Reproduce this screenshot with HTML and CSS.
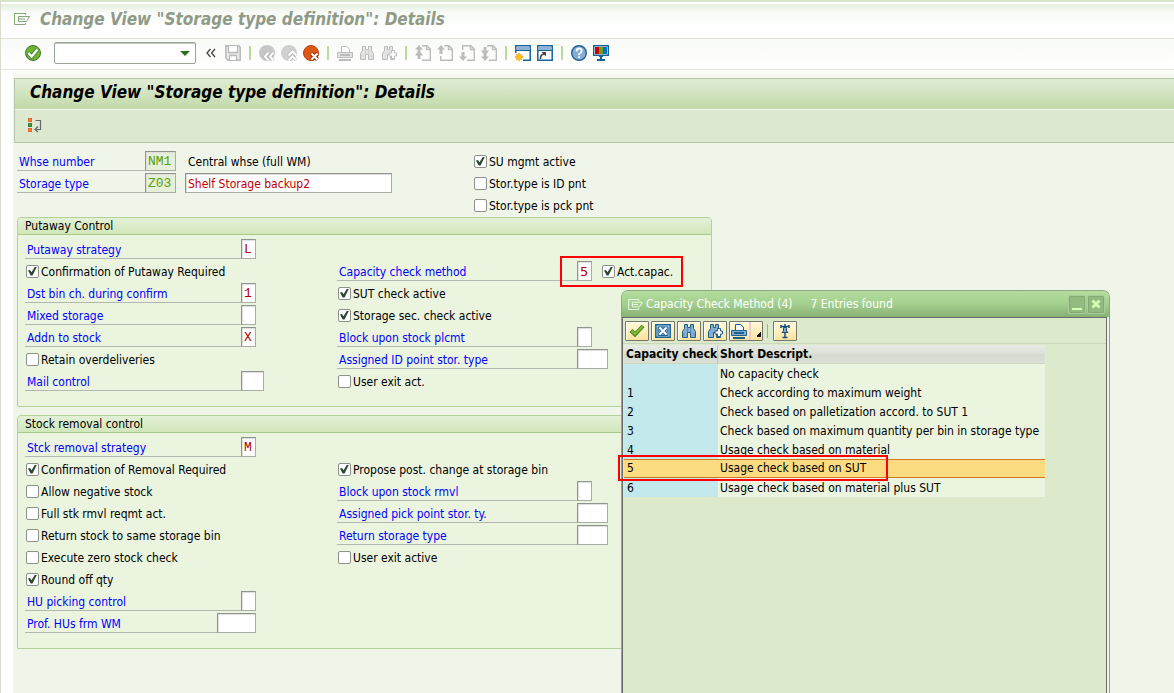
FILE: index.html
```html
<!DOCTYPE html>
<html lang="en">
<head>
<meta charset="utf-8">
<title>Change View "Storage type definition": Details</title>
<link rel="stylesheet" href="styles.css">
</head>
<body>
<svg class="defs" width="0" height="0" aria-hidden="true">
  <symbol id="menu" viewBox="0 0 16 12"><path d="M11.500 2V.5H.5v11h11V10M15.500 3.500H4.500v5h8zM4 6h7" fill="none" stroke="currentColor"/></symbol>
  <symbol id="find" viewBox="0 0 16 16"><path d="M3.500 1.500h3v3h3v-3h3v4l2 3v6h-5v-5h-3v5h-5v-6l2-3z" fill="var(--fill)" stroke="currentColor"/><path d="M6.500 5v4M9.500 5v4M3 10v3M13 10v3" stroke="currentColor" opacity=".4"/></symbol>
  <symbol id="findnext" viewBox="0 0 16 16"><path d="M3.500 1.500h3v3h2v-3h3v4l2 3v6h-4v-5h-3v5h-5v-6l2-3z" fill="var(--fill)" stroke="currentColor"/><path d="M10.500 5.500h3v2.500h2v3h-2v2.500h-3v-2.500h-2.500v-3h2.500z" fill="#fff" stroke="currentColor"/></symbol>
  <symbol id="print" viewBox="0 0 16 16"><path d="M4.500 7V1.500h5l3 2.500V7" fill="#fff" stroke="currentColor"/><path d="M.5 7.500h15v5H.5z" fill="var(--fill)" stroke="currentColor"/><path d="M3 10h10M2 15h12" stroke="currentColor" stroke-width="2"/></symbol>
</svg>

<header class="titlebar">
  <svg class="menu-icon" width="16" height="12" aria-hidden="true"><use href="#menu"/></svg>
  <span class="heading">Change View "Storage type definition": Details</span>
</header>

<nav class="toolbar" aria-label="System toolbar">
  <button class="tool" aria-label="Enter"><svg viewBox="0 0 16 16"><circle cx="8" cy="8" r="7.500" fill="#6eb32b" stroke="#3d7a33"/><path d="M3.500 8l3 3.500 6-7" fill="none" stroke="#3d7a33" stroke-width="4"/><path d="M3.500 8l3 3.500 6-7" fill="none" stroke="#fff" stroke-width="2.500"/></svg></button>
  <div class="command"><input type="text" aria-label="Command"><button aria-label="Show history"></button></div>
  <button class="tool chevrons" aria-label="Hide command field"><svg viewBox="0 0 10 10"><path d="M4.500 1L1 5l3.500 4M9 1L5.500 5 9 9" fill="none" stroke="#444" stroke-width="1.300"/></svg></button>
  <button class="tool" aria-label="Save"><svg viewBox="0 0 16 16"><path d="M.8.8h13l1.400 1.400v13H3L.8 13z" fill="#e9e9e9" stroke="#b9b9b9" stroke-width="1.500"/><path d="M3.500 1v6.500h9V1M4.500 15v-4.500h7V15" fill="#fff" stroke="#b9b9b9" stroke-width="1.300"/></svg></button>
  <span class="sep"></span>
  <button class="tool" aria-label="Back"><svg viewBox="0 0 16 16"><circle cx="8" cy="8" r="8" fill="#c6c6c6"/><path d="M9.500 7.500L6 11.500l3.500 4M14.500 7.500L11 11.500l3.500 4" fill="none" stroke="#aaa" stroke-width="3"/><path d="M9.500 7.500L6 11.500l3.500 4M14.500 7.500L11 11.500l3.500 4" fill="none" stroke="#fff" stroke-width="2"/></svg></button>
  <button class="tool" aria-label="Exit"><svg viewBox="0 0 16 16"><circle cx="8" cy="8" r="8" fill="#d0d0d0"/><path d="M7.500 10.500l4-4 4 4M7.500 15.500l4-4 4 4" fill="none" stroke="#aaa" stroke-width="3"/><path d="M7.500 10.500l4-4 4 4M7.500 15.500l4-4 4 4" fill="none" stroke="#fff" stroke-width="2"/></svg></button>
  <button class="tool" aria-label="Cancel"><svg viewBox="0 0 16 16"><circle cx="8" cy="8" r="7.500" fill="#dc5914" stroke="#bf3d0c"/><path d="M8.500 8.500l6 6M14.500 8.500l-6 6" stroke="#a62008" stroke-width="4"/><path d="M8.500 8.500l6 6M14.500 8.500l-6 6" stroke="#fff" stroke-width="2.200"/></svg></button>
  <span class="sep"></span>
  <button class="tool off" aria-label="Print"><svg><use href="#print"/></svg></button>
  <button class="tool off" aria-label="Find"><svg><use href="#find"/></svg></button>
  <button class="tool off" aria-label="Find next"><svg><use href="#findnext"/></svg></button>
  <span class="sep"></span>
  <button class="tool off" aria-label="First page"><svg viewBox="0 0 16 16"><path d="M7 .7h5l3.300 3.300v11.300H7M11.500 1v3.500H15" fill="none" stroke="currentColor" stroke-width="1.400"/><path d="M4 0l4 4.500H5.500V7L8 10.500H5.500V14h-3v-3.500H0L2.500 7V4.500H0z" fill="currentColor"/></svg></button>
  <button class="tool off" aria-label="Previous page"><svg viewBox="0 0 16 16"><path d="M7 .7h5l3.300 3.300v11.300H3.700V11M11.500 1v3.500H15" fill="none" stroke="currentColor" stroke-width="1.400"/><path d="M4 0l4 4.500H5.500V9h-3V4.500H0z" fill="currentColor"/></svg></button>
  <button class="tool off" aria-label="Next page"><svg viewBox="0 0 16 16"><path d="M3.700 5V.7H12l3.300 3.300v11.300H8M11.500 1v3.500H15" fill="none" stroke="currentColor" stroke-width="1.400"/><path d="M4 16l4-4.500H5.500V7h-3v4.500H0z" fill="currentColor"/></svg></button>
  <button class="tool off" aria-label="Last page"><svg viewBox="0 0 16 16"><path d="M6 .7h6l3.300 3.300v11.300H8M11.500 1v3.500H15" fill="none" stroke="currentColor" stroke-width="1.400"/><path d="M4 16l4-4.500H5.500V9L8 5.500H5.500V2h-3v3.500H0L2.500 9v2.500H0z" fill="currentColor"/></svg></button>
  <span class="sep"></span>
  <button class="tool" aria-label="New session"><svg viewBox="0 0 16 16"><path d="M.8 8V.8h14.400v14.400H8" fill="#fff" stroke="#16629a" stroke-width="1.500"/><path d="M1.500 1.500h13V5h-13z" fill="#8fb2d6"/><path d="M1 5.500h14" stroke="#16629a"/><path d="M4 8v8M0 12h8M1.200 9.200l5.600 5.600M6.800 9.200l-5.600 5.600" stroke="#f39200" stroke-width="1.300"/><circle cx="4" cy="12" r="2.300" fill="#ffc400"/></svg></button>
  <button class="tool" aria-label="Create shortcut"><svg viewBox="0 0 16 16"><path d="M.8.8h14.400v14.400H.8z" fill="#fff" stroke="#16629a" stroke-width="1.500"/><path d="M1.500 1.500h13V5h-13z" fill="#8fb2d6"/><path d="M1 5.500h14" stroke="#16629a"/><path d="M3.500 14q-.5-4 3.500-5" fill="none" stroke="#444" stroke-width="1.600"/><path d="M4.500 7H9v4.500z" fill="#444"/></svg></button>
  <span class="sep"></span>
  <button class="tool" aria-label="Help"><svg viewBox="0 0 16 16"><circle cx="8" cy="8" r="7.300" fill="#85abd3" stroke="#1c6395" stroke-width="1.400"/><path d="M5.500 6.500q0-3 2.700-3t2.500 2.500q0 1.500-2.500 3v1.200M8.200 11.300v2" fill="none" stroke="#fff" stroke-width="1.800"/></svg></button>
  <button class="tool" aria-label="Customize layout"><svg viewBox="0 0 16 16"><path d="M.7.700h14.600v9.600H.7z" fill="#fff" stroke="#16629a" stroke-width="1.400"/><path d="M2 2h4v7H2z" fill="#d00000"/><path d="M6 2h4v7H6z" fill="#62a51b"/><path d="M10 2h4v7h-4z" fill="#0071c5"/><path d="M6 11h4v1H6zM7 11h2v3H7zM4 14h8v2H4z" fill="#16629a"/></svg></button>
</nav>

<main class="screen">
  <section class="app-head">
    <h1 class="heading">Change View "Storage type definition": Details</h1>
    <div class="app-tools"><button class="tool" aria-label="Expand or collapse"><svg viewBox="0 0 16 16"><path d="M.7 1.700h2.600v2.600H.7zM.7 11.700h2.600v2.600H.7z" fill="#ffd54a" stroke="#e4672b" stroke-width="1.400"/><path d="M.7 6.700h2.600v2.600H.7z" fill="#8cc63f" stroke="#35803a" stroke-width="1.400"/><path d="M7.500 3.500h5v9H7M10 9.500l-3 3 3 2.500" fill="none" stroke="#66666e" stroke-width="1.200"/></svg></button></div>
  </section>

  <form class="form">
    <div class="top">
      <div>
        <div class="row"><label class="lbl key" for="wh">Whse number</label><input class="f w3 ro" id="wh" value="NM1" readonly><span class="note">Central whse (full WM)</span></div>
        <div class="row"><label class="lbl key" for="st">Storage type</label><input class="f w3 ro" id="st" value="Z03" readonly><input class="f desc" aria-label="Description" value="Shelf Storage backup2"></div>
      </div>
      <div>
        <label class="check"><input type="checkbox" checked><span>SU mgmt active</span></label>
        <label class="check"><input type="checkbox"><span>Stor.type is ID pnt</span></label>
        <label class="check"><input type="checkbox"><span>Stor.type is pck pnt</span></label>
      </div>
    </div>

    <section class="group">
      <h2>Putaway Control</h2>
      <div class="cols">
        <div>
          <div class="row"><label class="lbl" for="a1">Putaway strategy</label><input class="f w1" id="a1" value="L"></div>
          <label class="check"><input type="checkbox" checked><span>Confirmation of Putaway Required</span></label>
          <div class="row"><label class="lbl" for="a2">Dst bin ch. during confirm</label><input class="f w1" id="a2" value="1"></div>
          <div class="row"><label class="lbl" for="a3">Mixed storage</label><input class="f w1" id="a3"></div>
          <div class="row"><label class="lbl" for="a4">Addn to stock</label><input class="f w1" id="a4" value="X"></div>
          <label class="check"><input type="checkbox"><span>Retain overdeliveries</span></label>
          <div class="row"><label class="lbl" for="a5">Mail control</label><input class="f w2" id="a5"></div>
        </div>
        <div class="right">
          <div class="row capacity"><label class="lbl" for="b1">Capacity check method</label><input class="f w1 sans" id="b1" value="5"><label class="check"><input type="checkbox" checked><span>Act.capac.</span></label><span class="mark"></span></div>
          <label class="check"><input type="checkbox" checked><span>SUT check active</span></label>
          <label class="check"><input type="checkbox" checked><span>Storage sec. check active</span></label>
          <div class="row"><label class="lbl" for="b2">Block upon stock plcmt</label><input class="f w1" id="b2"></div>
          <div class="row"><label class="lbl" for="b3">Assigned ID point stor. type</label><input class="f w3" id="b3"></div>
          <label class="check"><input type="checkbox"><span>User exit act.</span></label>
        </div>
      </div>
    </section>

    <section class="group">
      <h2>Stock removal control</h2>
      <div class="cols">
        <div>
          <div class="row"><label class="lbl" for="c1">Stck removal strategy</label><input class="f w1" id="c1" value="M"></div>
          <label class="check"><input type="checkbox" checked><span>Confirmation of Removal Required</span></label>
          <label class="check"><input type="checkbox"><span>Allow negative stock</span></label>
          <label class="check"><input type="checkbox"><span>Full stk rmvl reqmt act.</span></label>
          <label class="check"><input type="checkbox"><span>Return stock to same storage bin</span></label>
          <label class="check"><input type="checkbox"><span>Execute zero stock check</span></label>
          <label class="check"><input type="checkbox" checked><span>Round off qty</span></label>
          <div class="row"><label class="lbl" for="c2">HU picking control</label><input class="f w1" id="c2"></div>
          <div class="row"><label class="lbl short" for="c3">Prof. HUs frm WM</label><input class="f w4" id="c3"></div>
        </div>
        <div class="right">
          <label class="check"><input type="checkbox" checked><span>Propose post. change at storage bin</span></label>
          <div class="row"><label class="lbl" for="d1">Block upon stock rmvl</label><input class="f w1" id="d1"></div>
          <div class="row"><label class="lbl" for="d2">Assigned pick point stor. ty.</label><input class="f w3" id="d2"></div>
          <div class="row"><label class="lbl" for="d3">Return storage type</label><input class="f w3" id="d3"></div>
          <label class="check"><input type="checkbox"><span>User exit active</span></label>
        </div>
      </div>
    </section>
  </form>
</main>

<section class="popup" role="dialog" aria-label="Capacity Check Method">
  <header class="popup-head">
    <svg class="menu-icon" width="15" height="11" aria-hidden="true"><use href="#menu"/></svg>
    <span>Capacity Check Method (4)</span><span class="hits">7 Entries found</span>
    <button class="win" aria-label="Minimize"><svg viewBox="0 0 14 14"><path d="M2 11h10v2H2z" fill="#d3ffb5"/></svg></button>
    <button class="win" aria-label="Close"><svg viewBox="0 0 14 14"><path d="M3.500 3.500l7 7M10.500 3.500l-7 7" stroke="#d3ffb5" stroke-width="2.800"/></svg></button>
  </header>
  <div class="popup-body">
    <div class="popup-tools">
      <button class="pb" aria-label="Copy"><svg viewBox="0 0 16 16"><path d="M2 7.500l4 4L14 3" fill="none" stroke="#3f7d2d" stroke-width="4"/><path d="M2.500 7.800L6 11l7.500-7.500" fill="none" stroke="#7dbb2c" stroke-width="2.400"/></svg></button>
      <button class="pb" aria-label="Close list"><svg viewBox="0 0 16 16"><path d="M.8 1.800h14.400v12.400H.8z" fill="#b9d0e6" stroke="#1f6496" stroke-width="1.500"/><path d="M3 4h10v8.500H3z" fill="#7fa8cf" stroke="#1f6496"/><path d="M5 5l6 6M11 5l-6 6" stroke="#1f6496" stroke-width="3.600"/><path d="M4.500 4.500l7 7M11.500 4.500l-7 7" stroke="#fff" stroke-width="2"/></svg></button>
      <button class="pb" aria-label="Find"><svg><use href="#find"/></svg></button>
      <button class="pb" aria-label="Find next"><svg><use href="#findnext"/></svg></button>
      <button class="pb wide" aria-label="Print"><svg><use href="#print"/></svg><span class="split"></span></button>
      <span class="psep"></span>
      <button class="pb" aria-label="Personal value list"><svg viewBox="0 0 16 16"><path d="M4 3.500h8M4 2v3M12 2v3M8 1v14M5.500 14.500h5" fill="none" stroke="#16527f" stroke-width="1.500"/><path d="M6.500 4.500h3V8l1.500 1.500H5L6.500 8z" fill="#85abd3" stroke="#16527f"/></svg></button>
    </div>
    <table class="list">
      <thead><tr><th scope="col">Capacity check</th><th scope="col">Short Descript.</th></tr></thead>
      <tbody>
        <tr><td></td><td>No capacity check</td></tr>
        <tr><td>1</td><td>Check according to maximum weight</td></tr>
        <tr><td>2</td><td>Check based on palletization accord. to SUT 1</td></tr>
        <tr><td>3</td><td>Check based on maximum quantity per bin in storage type</td></tr>
        <tr><td>4</td><td>Usage check based on material</td></tr>
        <tr class="sel"><td>5<span class="mark"></span></td><td>Usage check based on SUT</td></tr>
        <tr><td>6</td><td>Usage check based on material plus SUT</td></tr>
      </tbody>
    </table>
  </div>
</section>
</body>
</html>
```

FILE: styles.css
```css
* { box-sizing: border-box; }

body {
  margin: 0;
  position: relative;
  min-height: 100vh;
  display: flex;
  flex-direction: column;
  border-left: 1px solid #d9dccf;
  background: #fff;
  color: #000;
  font: 12px/18px "DejaVu Sans Condensed", "DejaVu Sans", sans-serif;
}

.defs { position: absolute; }
button, input { font: inherit; color: inherit; margin: 0; padding: 0; border: 0; border-radius: 0; }
button { background: none; }
h1, h2 { margin: 0; }

.heading { font-size: 17px; line-height: 22px; font-weight: bold; font-style: italic; }

.titlebar {
  height: 39px;
  display: flex;
  align-items: center;
  gap: 10px;
  padding: 0 0 2px 13px;
  border-top: 2px solid #d8e5cd;
  border-bottom: 1px solid #e0e3d5;
  background: linear-gradient(#fff 2px, #e4efdd 2px, #f8fbf5 10px, #fff 26px);
  color: #8f9a88;
}
.menu-icon { flex: none; color: #86a877; }

.toolbar {
  height: 31px;
  display: flex;
  align-items: center;
  gap: 6px;
  padding: 0 0 2px 24px;
  border-bottom: 1px solid #e3e5df;
  background: linear-gradient(#f9fbf7, #fff);
}
.tool { width: 16px; height: 16px; flex: none; display: block; }
.tool svg { display: block; width: 100%; height: 100%; }
.off { color: #bcbcbc; --fill: #e3e3e3; }
.chevrons { width: 10px; height: 10px; margin: 0 3px 0 4px; }
.sep { width: 6px; height: 14px; background: linear-gradient(90deg, transparent 2px, #b9dba0 2px, #b9dba0 4px, transparent 4px); }

.command {
  width: 142px;
  height: 22px;
  margin-left: 7px;
  display: flex;
  border: 1px solid #9aa596;
  border-radius: 2px;
  background: #fff;
  box-shadow: inset 0 1px #c3cac0;
}
.command input { flex: 1; min-width: 0; outline: 0; background: none; }
.command button { width: 20px; display: flex; align-items: center; justify-content: center; }
.command button::before { content: ""; border: 5px solid transparent; border-top: 5px solid #2f6d20; border-bottom: 0; }

.screen {
  flex: 1;
  margin-left: 12px;
  padding-top: 8px;
  background: linear-gradient(#fbfdf9, #f0f5ea 12px);
}
.app-head { margin-left: 1px; border: 1px solid #b5c8a6; border-width: 1px 0 1px 1px; background: #dde8d0; }
.app-head h1 {
  height: 31px;
  padding: 2px 0 0 15px;
  border-bottom: 1px solid #f3f8ee;
  background: linear-gradient(#e0edd5, #c2d9a9);
}
.app-tools { height: 32px; display: flex; align-items: center; padding: 0 0 2px 13px; }

.form { padding: 7px 4px 12px 4px; }
.top { display: grid; grid-template-columns: 456px 1fr; }
.row { display: flex; height: 22px; padding-top: 1px; position: relative; }
.lbl { width: 216px; height: 20px; padding-left: 2px; border-bottom: 1px solid #b4b7b0; color: #00f; line-height: 22px; white-space: nowrap; }
.key { width: 128px; }
.short { width: 192px; }
.right .lbl { width: 240px; }
.note { padding-left: 12px; line-height: 22px; }

.f {
  height: 20px;
  flex: none;
  padding-left: 2px;
  border: 1px solid #a9ada6;
  border-top-color: #90948d;
  border-left-color: #90948d;
  background: #fff;
  box-shadow: inset 1px 1px 1px #ddd;
  color: #b00000;
  font: 13px/18px "Liberation Mono", monospace;
}
.w1 { width: 15px; }
.w2 { width: 23px; }
.w3 { width: 31px; }
.w4 { width: 39px; }
.ro { background: #e6efda; color: #5a9e00; }
.sans { font-family: "DejaVu Sans", sans-serif; }
.desc { width: 207px; margin-left: 9px; padding-top: 1px; color: #c00000; font: 12px/18px "DejaVu Sans Condensed", sans-serif; }

.check { display: flex; width: fit-content; align-items: center; gap: 2px; height: 22px; padding-left: 1px; white-space: nowrap; }
.check span { line-height: 20px; padding-top: 1px; }
.check input {
  appearance: none;
  width: 13px;
  height: 13px;
  flex: none;
  border: 1px solid #8c918a;
  border-radius: 2px;
  background: #fff;
}
.check input:checked::before {
  content: "";
  display: block;
  width: 9px;
  height: 9px;
  margin: 1px;
  background: #2c4430;
  clip-path: polygon(0 45%, 22% 38%, 40% 65%, 78% 0, 100% 0, 50% 100%, 30% 100%);
}

.group { max-width: 695px; border: 1px solid #b3d295; border-radius: 4px 4px 0 0; background: #eaf4df; }
.top + .group { margin-top: 1px; }
.group + .group { margin-top: 8px; }
.group h2 {
  height: 17px;
  padding-left: 7px;
  border-bottom: 1px solid #a8cb89;
  border-radius: 3px 3px 0 0;
  background: linear-gradient(#e3f0d6, #d2e7bb);
  font-size: 12px;
  line-height: 16px;
  font-weight: normal;
}
.cols { display: grid; grid-template-columns: 312px 1fr; padding: 3px 7px 14px; }
.right { padding-top: 22px; }
.capacity .check { height: 20px; margin-left: 9px; }

.mark { position: absolute; border: 2px solid #f00; pointer-events: none; }
.capacity .mark { left: 223px; top: -4px; width: 123px; height: 31px; }

.popup {
  position: absolute;
  left: 620px;
  top: 290px;
  bottom: 0;
  width: 489px;
  display: flex;
  flex-direction: column;
  border: 1px solid #8fa884;
  border-bottom: 0;
  border-radius: 7px 7px 0 0;
  background: #eef5e8;
}
.popup-head {
  height: 26px;
  flex: none;
  display: flex;
  align-items: center;
  gap: 3px;
  padding: 0 5px 0 6px;
  border-radius: 6px 6px 0 0;
  background: linear-gradient(#b3dd9d, #a3d08e 50%, #88b077);
  color: #fff;
}
.popup-head .menu-icon { color: #eefce6; }
.hits { margin: 0 auto 0 15px; }
.win { width: 16px; height: 17px; border: 1px solid #84ab74; border-radius: 1px; background: #93bb80; box-shadow: 0 0 0 1px #a9cf98; }
.win svg { display: block; width: 14px; height: 14px; }

.popup-body { flex: 1; margin-right: 2px; border: 1px solid #6b6b6e; border-width: 1px 1px 0 1px; background: #dceacb; }
.popup-tools { height: 26px; display: flex; align-items: center; gap: 2px; padding: 0 0 0 2px; border-bottom: 1px solid #cad8bd; }
.pb {
  width: 24px;
  height: 20px;
  display: flex;
  align-items: center;
  justify-content: center;
  border: 1px solid #77766a;
  border-radius: 1px;
  background: linear-gradient(#fff9d8, #fbe39e);
  box-shadow: inset 1px 1px #fffdf0;
  color: #1b5f8e;
  --fill: #86acd4;
}
.pb svg { width: 16px; height: 16px; flex: none; }
.wide { width: 34px; justify-content: space-between; padding-left: 1px; }
.split { width: 13px; height: 18px; border-left: 2px solid #f5c8d0; background: linear-gradient(135deg, transparent 50%, #111 50%) 5px 10px / 5px 5px no-repeat; }
.psep { width: 4px; height: 14px; border-left: 1px solid #a9a9a9; margin-left: 2px; }

.list { width: 421px; margin: 1px 0 0 1px; border-collapse: separate; border-spacing: 0; table-layout: fixed; }
.list th, .list td { height: 19px; padding: 0 2px; text-align: left; line-height: 18px; white-space: nowrap; }
.list th { background: linear-gradient(#e6eae2, #dde2d9 50%, #d3dacd 50%, #dce0d8); border-bottom: 1px solid #cad8bd; overflow: hidden; }
.list th:first-child { width: 94px; border-right: 1px solid #bcc4b8; }
.list td { background: #eaf4df; }
.list td:first-child { padding-left: 3px; background: #c4e9ec; }
.list .sel td { position: relative; border: 1px solid #d2761f; border-width: 1px 0; background: #fddb81; line-height: 17px; }
.sel .mark { left: -6px; top: -5px; width: 270px; height: 26px; }
.list .sel td:first-child { z-index: 1; }
```
